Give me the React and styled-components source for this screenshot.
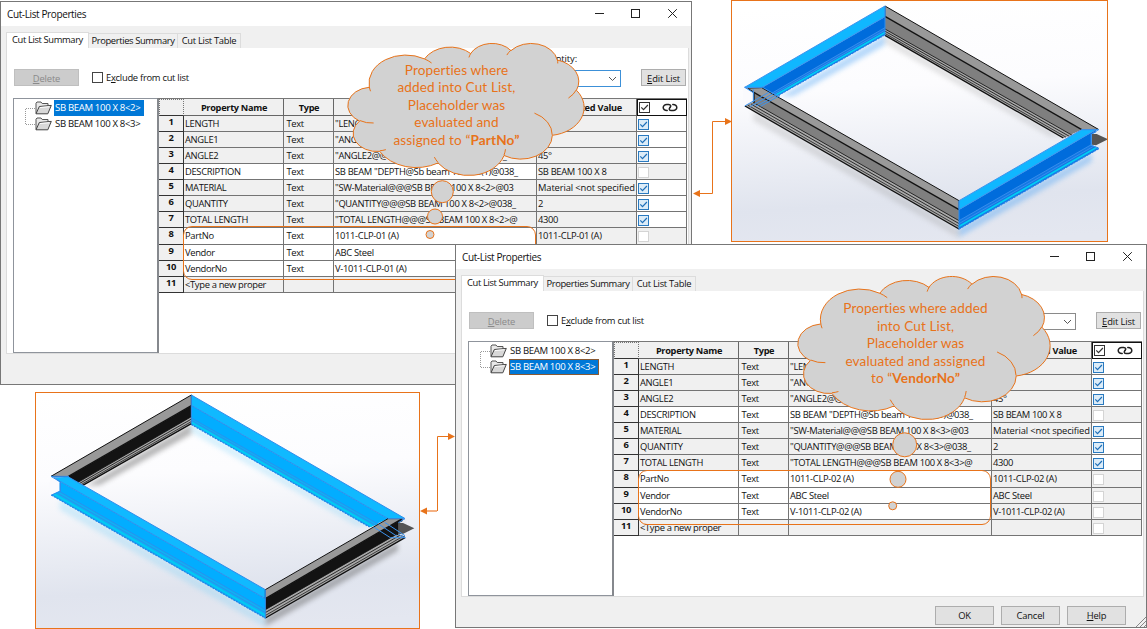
import React from "react";
import styled, { createGlobalStyle, css } from "styled-components";

const ORANGE = "#e8731a";

const GlobalStyle = createGlobalStyle`
  body { margin: 0; background: #fff; }
  * { box-sizing: border-box; }
`;

const Desktop = styled.main`
  position: relative;
  width: 1147px;
  height: 629px;
  overflow: hidden;
  background: #fff;
  font: 9.4px/12px "Open Sans", "Noto Sans", sans-serif;
  letter-spacing: -0.3px;
  color: #111;
  white-space: nowrap;
`;

const Placed = styled.div`
  position: absolute;
  left: ${(p) => p.$x}px;
  top: ${(p) => p.$y}px;
`;

const Overlay = styled.svg`
  position: absolute;
  left: 0;
  top: 0;
  pointer-events: none;
`;

/* ---------- dialog ---------- */

const Dialog = styled.section`
  width: 692px;
  height: 384px;
  display: flex;
  flex-direction: column;
  background: #f0f0f0;
  border: 1px solid #777;
`;

const TitleBar = styled.header`
  flex: 0 0 24px;
  display: flex;
  align-items: center;
  justify-content: space-between;
  padding: 0 13px 0 6px;
  background: #fff;
`;

const Title = styled.span`
  margin-top: -1px;
  font-size: 10px;
  letter-spacing: -0.38px;
`;

const WindowButtons = styled.div`
  display: flex;
  gap: 26px;
  margin-top: -1px;
  svg { display: block; }
`;

const Tabs = styled.nav`
  flex: 0 0 22px;
  display: flex;
  align-items: flex-end;
  padding-left: 5px;
`;

const Tab = styled.div`
  width: ${(p) => p.$w}px;
  height: ${(p) => (p.$active ? 17 : 15)}px;
  margin-bottom: ${(p) => (p.$active ? -1 : 0)}px;
  padding-top: 1px;
  text-align: center;
  background: ${(p) => (p.$active ? "#fff" : "#f0f0f0")};
  border: 1px solid #dcdcdc;
  border-bottom: 0;
  border-left-width: ${(p) => (p.$active ? 1 : 0)}px;
  letter-spacing: ${(p) => p.$ls}px;
`;

const Panel = styled.div`
  flex: 0 0 306px;
  display: flex;
  flex-direction: column;
  margin: 0 2px 0 5px;
  background: #fff;
  border: solid #dcdcdc;
  border-width: 0 1px 1px;
`;

const Toolbar = styled.div`
  flex: 0 0 50px;
  display: flex;
  align-items: flex-start;
  padding: 22px 2px 0 7px;
`;

const Button = styled.button`
  width: ${(p) => p.$w}px;
  height: ${(p) => p.$h || 17}px;
  padding: ${(p) => (p.$h ? 0 : "2px")} 0 0;
  font: inherit;
  font-size: 9.4px;
  letter-spacing: -0.15px;
  line-height: 12px;
  color: ${(p) => (p.disabled ? "#8a8a8a" : "#111")};
  background: ${(p) => (p.disabled ? "#ccc" : "#e1e1e1")};
  border: 1px solid ${(p) => (p.disabled ? "#bfbfbf" : "#adadad")};
`;

const ButtonSlot = styled.div`
  display: flex;
  margin: -1px 0 0 ${(p) => p.$gap || 0}px;
`;

const Exclude = styled.label`
  display: flex;
  align-items: center;
  gap: 3px;
  height: 15px;
  margin-left: 13px;
  letter-spacing: -0.27px;
`;

const Box = styled.span`
  flex: none;
  width: 11px;
  height: 11px;
  background: #fff;
  border: 1px solid #444;
`;

const Quantity = styled.div`
  position: relative;
  width: 80px;
  height: 17px;
  margin-left: auto;
  display: flex;
  align-items: center;
  justify-content: flex-end;
  padding-right: 3px;
  border: 1px solid ${(p) => (p.$focus ? "#3c90d8" : "#8a8a8a")};
`;

const QuantityLabel = styled.span`
  position: absolute;
  right: 43px;
  top: -18px;
  letter-spacing: -0.1px;
`;

const Content = styled.div`
  flex: 1;
  display: flex;
  padding-left: 6px;
`;

const Tree = styled.div`
  flex: 0 0 144px;
  border: 1px solid #8f949c;
  border-right: 0;
  padding: 1px 0 0 11px;
  display: flex;
`;

const TreeItems = styled.div`
  display: flex;
  flex-direction: column;
`;

const TreeItem = styled.div`
  display: flex;
  align-items: center;
  gap: 2px;
  height: 16.2px;
  svg { display: block; flex: none; }
`;

const TreeLabel = styled.span`
  height: 16px;
  width: 90px;
  padding: 2px 0 0 1px;
  font-size: 9.6px;
  letter-spacing: -0.35px;
  ${(p) =>
    p.$on &&
    css`
      color: #fff;
      background: #0078d7;
      box-shadow: ${p.$focus ? "inset 0 0 0 1px #8a5a33" : "none"};
    `}
`;

const TableArea = styled.div`
  flex: 0 0 530px;
  border-left: 2px solid #85888d;
  border-top: 1px solid #777;
`;

const Row = styled.div`
  display: grid;
  grid-template-columns: 25px 100px 50px 203px 100px 50px;
  height: ${(p) => (p.$head ? 17 : 16.07)}px;
`;

const Cell = styled.div`
  overflow: hidden;
  padding: 2px 0 0 ${(p) => p.$pad ?? 1}px;
  letter-spacing: ${(p) => p.$ls ?? -0.33}px;
  background: ${(p) => (p.$white ? "#fff" : "#f0f0f0")};
  border: solid #747474;
  border-width: 0 1px 1px 0;
`;

const HeadCell = styled(Cell)`
  padding-top: 3px;
  font-weight: 700;
  text-align: center;
  font-size: 9.2px;
  color: #111;
  border-color: #666;
`;

const NumCell = styled(Cell)`
  padding: 0;
  text-align: center;
  font-weight: 700;
  border-color: #333;
`;

const CheckHead = styled.div`
  display: flex;
  align-items: center;
  justify-content: space-between;
  padding: 0 8px 0 1px;
  background: #fff;
  border: 1px solid #111;
`;

const CheckCell = styled(Cell)`
  padding: 3px 0 0 1px;
  svg { display: block; }
`;

const Corner = styled(Cell)`
  border: 1px dotted #777;
  border-bottom: 1px solid #333;
`;

const Footer = styled.footer`
  flex: 1;
  position: relative;
  display: flex;
  align-items: flex-start;
  justify-content: flex-end;
  gap: 7px;
  padding: 9px 20px 0 0;
`;

const Grip = styled.svg`
  position: absolute;
  right: 0;
  bottom: 0;
`;

const Check = ({ on, dark }) => (
  <svg width="11" height="11" viewBox="0 0 11 11">
    <rect x=".5" y=".5" width="10" height="10" fill={dark ? "#fff" : on ? "#dcecf8" : "#fff"}
      stroke={dark ? "#333" : on ? "#2a7ac0" : "#d4d4d4"} />
    {on && <path d="M2.3 5.4 4.5 7.7 8.9 3" fill="none" stroke={dark ? "#333" : "#1f6fb8"} strokeWidth="1.2" />}
  </svg>
);

const LinkIcon = () => (
  <svg width="16" height="9" viewBox="0 0 16 9" fill="none" stroke="#222" strokeWidth="1.500" strokeLinecap="round">
    <path d="M5.200 7.500C-.2 7.700.1 1.500 4.800 1.500H6.600C9 1.500 9.200 3.300 8 4.500" />
    <path d="M10.800 1.500C16.200 1.300 15.900 7.500 11.200 7.500H9.400C7 7.500 6.800 5.700 8 4.500" />
  </svg>
);

const Folder = () => (
  <svg width="17" height="14" viewBox="0 0 17 14">
    <path d="M1 12.500V2.200L2 1h4l1.200 1.500H13V5" fill="#e9e9e9" stroke="#555" />
    <path d="M1 12.800 4.300 5.500 16.300 4.400 12.800 12.800Z" fill="#d8d8d8" stroke="#444" strokeLinejoin="round" />
    <path d="M5 6.500 14.500 5.700" stroke="#fff" />
  </svg>
);

const Branch = () => (
  <svg width="10" height="34" viewBox="0 0 10 34" fill="none" stroke="#999" strokeDasharray="1 1">
    <path d="M10 8.500H.5V24.500H10" />
  </svg>
);

const rowsFor = (n) => [
  ["LENGTH", `"LENGTH@@@SB BEAM 100 X 8<${n}>@038_`, "", 1, 0],
  ["ANGLE1", `"ANGLE1@@@SB BEAM 100 X 8<${n}>@038_`, "", 1, 0],
  ["ANGLE2", `"ANGLE2@@@SB BEAM 100 X 8<${n}>@038_`, "45°", 1, 0],
  ["DESCRIPTION", `SB BEAM "DEPTH@Sb beam 100 X 8(1)@038_`, "SB BEAM 100 X 8", 0, 1],
  ["MATERIAL", `"SW-Material@@@SB BEAM 100 X 8<${n}>@03`, "Material <not specified", 1, 0],
  ["QUANTITY", `"QUANTITY@@@SB BEAM 100 X 8<${n}>@038_`, "2", 1, 0],
  ["TOTAL LENGTH", `"TOTAL LENGTH@@@SB BEAM 100 X 8<${n}>@`, "4300", 1, 0],
  ["PartNo", `1011-CLP-0${n - 1} (A)`, `1011-CLP-0${n - 1} (A)`, 0, 1],
  ["Vendor", "ABC Steel", n === 3 ? "ABC Steel" : "", 0, 1],
  ["VendorNo", `V-1011-CLP-0${n - 1} (A)`, n === 3 ? `V-1011-CLP-0${n - 1} (A)` : "", 0, 1],
  ["<Type a new proper", "", "", 0, 0],
];

function CutListDialog({ selected, front }) {
  return (
    <Dialog>
      <TitleBar>
        <Title>Cut-List Properties</Title>
        <WindowButtons>
          <svg width="11" height="11"><path d="M2 5.500h9" stroke="#222" /></svg>
          <svg width="11" height="11"><rect x="1.500" y="1.500" width="8" height="8" fill="none" stroke="#222" /></svg>
          <svg width="11" height="11"><path d="M1.200 1.200l8.600 8.600M9.800 1.200l-8.600 8.600" stroke="#222" /></svg>
        </WindowButtons>
      </TitleBar>
      <Tabs>
        <Tab $active $w={83} $ls={-0.38}>Cut List Summary</Tab>
        <Tab $w={89} $ls={-0.38}>Properties Summary</Tab>
        <Tab $w={63} $ls={-0.3}>Cut List Table</Tab>
      </Tabs>
      <Panel>
        <Toolbar>
          <ButtonSlot><Button $w={65} disabled><u>D</u>elete</Button></ButtonSlot>
          <Exclude><Box /><span>E<u>x</u>clude from cut list</span></Exclude>
          <Quantity $focus={!front}>
            {!front && <QuantityLabel>Quantity:</QuantityLabel>}
            <svg width="9" height="6"><path d="M1 1l3.500 3.500L8 1" fill="none" stroke="#555" /></svg>
          </Quantity>
          <ButtonSlot $gap={20}><Button $w={45}><u>E</u>dit List</Button></ButtonSlot>
        </Toolbar>
        <Content>
          <Tree>
            <Branch />
            <TreeItems>
              {[2, 3].map((n) => (
                <TreeItem key={n}>
                  <Folder />
                  <TreeLabel $on={n === selected} $focus={front}>{`SB BEAM 100 X 8<${n}>`}</TreeLabel>
                </TreeItem>
              ))}
            </TreeItems>
          </Tree>
          <TableArea>
            <Row $head>
              <Corner />
              <HeadCell $ls={-0.3}>Property Name</HeadCell>
              <HeadCell>Type</HeadCell>
              <HeadCell />
              <HeadCell $ls={-0.25}>Evaluated Value</HeadCell>
              <CheckHead><Check on dark /><LinkIcon /></CheckHead>
            </Row>
            {rowsFor(selected).map(([name, value, evaluated, on, editable], i) => (
              <Row key={name}>
                <NumCell>{i + 1}</NumCell>
                <Cell $white={editable}>{name}</Cell>
                <Cell $pad={2.5} $white={editable}>{i < 10 ? "Text" : ""}</Cell>
                <Cell $white={editable}>{value}</Cell>
                <Cell $ls={evaluated.length > 20 ? -0.13 : undefined}>{evaluated}</Cell>
                <CheckCell $white={on}><Check on={on} /></CheckCell>
              </Row>
            ))}
          </TableArea>
        </Content>
      </Panel>
      <Footer>
        {front && (
          <>
            <Button $w={59} $h={19}>OK</Button>
            <Button $w={59} $h={19}>Cancel</Button>
            <Button $w={59} $h={19}><u>H</u>elp</Button>
            <Grip width="10" height="10"><path d="M0 10 10 0M4 10 10 4M8 10l2-2" stroke="#888" /></Grip>
          </>
        )}
      </Footer>
    </Dialog>
  );
}

/* ---------- beam frame renders ---------- */

const View = styled.svg`
  display: block;
`;

const GREY = { flange: "#999", web: "#7f7f7f", line: "#111", low: "#a8a8a8", glow: "#999" };
const BLACK = { flange: "#999", web: "#131313", line: "#111", low: "#a8a8a8", glow: "#555" };
const BLUE = { flange: "#10b7ff", web: "#006cdc", line: "#3f93ee", low: "#1478e4", glow: "#4fa4f5" };
const SKY = { flange: "#10b9ff", web: "#02adff", line: "#2f8cec", low: "#10b0f4", glow: "#6fcff8" };

function Beam({ top, mid, base, end, pal }) {
  // Each edge is [x, y, x, y]: upper flange edge, flange/web edge, web base, lower edge.
  const quad = (a, b) => `M${a[0]} ${a[1]}L${a[2]} ${a[3]}L${b[2]} ${b[3]}L${b[0]} ${b[1]}Z`;
  const mix = (t) => end.map((v, i) => base[i] + (v - base[i]) * t);
  const line = (e) => `M${e[0]} ${e[1]}L${e[2]} ${e[3]}`;
  const bright = pal === BLUE || pal === SKY;
  return (
    <g>
      <path d={quad(mid, end)} fill={pal.web} />
      <path d={quad(base, end)} fill={pal.low} />
      <path d={quad(top, mid)} fill={pal.flange} />
      <path d={line(top)} stroke={pal.line} strokeWidth="3" />
      <path d={line(mid)} stroke={pal.line} strokeWidth={bright ? 3 : 4} />
      <path d={line(base) + line(mix(0.35))} stroke={pal.line} strokeWidth="2.500" />
      <path d={line(mix(0.7))} stroke={bright ? "#00cdf4" : "#222"} strokeWidth={bright ? 5 : 2.5} />
      <path d={line(end)} stroke={bright ? "#2585e8" : "#111"} strokeWidth="4" strokeDasharray={bright ? "6 3" : "none"} />
      <path d={`M${top[0]} ${top[1]}L${mid[0]} ${mid[1]}M${top[2]} ${top[3]}L${mid[2]} ${mid[3]}`} stroke={pal.line} strokeWidth="2" />
    </g>
  );
}

function FrameView({ width, height, viewBox, short, long, shift, id }) {
  return (
    <View width={width} height={height} viewBox={viewBox} preserveAspectRatio="none">
      <defs>
        <linearGradient id={`${id}bg`} x1=".4" y1="0" x2=".5" y2="1">
          <stop offset="0" stopColor="#fff" />
          <stop offset=".35" stopColor="#fcfcfe" />
          <stop offset=".82" stopColor="#e0e4ee" />
          <stop offset="1" stopColor="#e4e7f0" />
        </linearGradient>
        <filter id={`${id}soft`} x="-20%" y="-20%" width="140%" height="140%">
          <feGaussianBlur stdDeviation="8" />
        </filter>
      </defs>
      <rect x="0" y="0" width="1170" height="735" fill={`url(#${id}bg)`} />
      <g transform={shift}>
        <g filter={`url(#${id}soft)`} opacity=".42">
          <path d="M150 290 465 105V135L190 288Z" fill={short.glow} />
          <path d="M687 685 1085 460V485L687 712Z" fill={short.glow} />
        </g>
        <g filter={`url(#${id}soft)`} opacity=".28">
          <path d="M465 105 1000 412 960 410 465 130Z" fill={long.glow} />
          <path d="M70 330 687 688V714L70 362Z" fill={long.glow} />
        </g>
        <Beam pal={long} top={[465, 18, 1105, 388]} mid={[465, 49, 1055, 389]} base={[465, 87, 1027, 406]} end={[465, 106, 1000, 414]} />
        <Beam pal={short} top={[44, 262, 465, 18]} mid={[95, 263, 465, 50]} base={[125, 280, 465, 83]} end={[138, 290, 465, 104]} />
        <path d="M44 264 72 280V305L44 317Z" fill="#fafafd" />
        <Beam pal={long} top={[95, 263, 687, 602]} mid={[52, 266, 687, 629]} base={[74, 310, 687, 662]} end={[45, 318, 687, 687]} />
        <path d="M40 264H50L70 279V306L46 317H40Z" fill="#fafafd" />
        <path d="M72 280V310" stroke={long.line} strokeWidth="4" />
        {long === GREY ? (
          <>
            <path d="M44 262 70 278M44 262H98L150 292M44 318 118 276M60 320 130 280M78 319 140 284M92 319 150 286M70 268V306" fill="none" stroke="#3c93ee" strokeWidth="3" />
          </>
        ) : (
          <path d="M44 262 72 279M44 262H98M44 319 72 306" fill="none" stroke="#2f8cec" strokeWidth="3" />
        )}
        <Beam pal={short} top={[687, 602, 1055, 389]} mid={[687, 629, 1098, 389]} base={[687, 662, 1084, 434]} end={[687, 687, 1106, 446]} />
        <path d="M1110 391 1086 403V436L1108 443Z" fill="#e9ecf2" />
        <path d="M1086 402 1100 402 1134 418 1098 436 1086 434Z" fill="#555" />
        <path d="M1084 401V438" stroke={short.line} strokeWidth="4" />
        <path d="M1055 389H1106L1086 401M1086 436 1106 446" fill="none" stroke="#3c93ee" strokeWidth="3" />
        {long === SKY && (
          <path d="M1012 414 1062 446H1108M1028 406 1082 442M1045 400 1106 440" fill="none" stroke="#3c93ee" strokeWidth="3" />
        )}
        <path d="M465 18V106M687 602V689" stroke="#2f8cec" strokeWidth="3" />
      </g>
    </View>
  );
}

const Picture = styled.figure`
  margin: 0;
  width: ${(p) => p.$w}px;
  height: ${(p) => p.$h}px;
  overflow: hidden;
  border: 1px solid ${ORANGE};
`;

/* ---------- callouts ---------- */

const OUTLINE = [
  [6753, 9190, -11429249, 7426832],
  [5333, 7267, -8646143, 5396714],
  [4365, 5945, -8748475, 5983381],
  [4857, 6595, -7859164, 7034504],
  [5333, 7273, -4722533, 6541615],
  [6775, 9220, -2776035, 7816140],
  [5785, 7867, 37501, 6842000],
  [6752, 9215, 1347096, 6910353],
  [7720, 10543, 3974558, 4542661],
  [4360, 5918, -16496525, 8804134],
  [4345, 5945, -14809710, 9151131],
];

const CREASES = [
  [4693, 26177, 4345, 5945, 5204520, 1585770],
  [6928, 34899, 4360, 5918, 4416628, 686848],
  [16478, 39090, 6752, 9215, 8257449, 844866],
  [28827, 34751, 6752, 9215, 387196, 959901],
  [34129, 22954, 5785, 7867, -4217541, 4255042],
  [41798, 15354, 5333, 7273, 1819082, 1665090],
  [38324, 5426, 4857, 6595, -824660, 891534],
  [29078, 3952, 4857, 6595, -8950887, 1091722],
  [22141, 4720, 4365, 5945, -9809656, 1061181],
  [14000, 5192, 6753, 9190, -4002417, 739161],
  [4127, 15789, 6753, 9190, 9459261, 711490],
];

// Turns a start point and a list of elliptical arcs (angles in 1/60000 degree) into path data.
function arcs(x, y, list, sx, sy) {
  const param = (a, rx, ry) => Math.atan2(rx * Math.sin(a), ry * Math.cos(a));
  let d = `M${x * sx} ${y * sy}`;
  list.forEach(([rx, ry, start, sweep]) => {
    const a = (start / 60000) * (Math.PI / 180);
    const b = a + (sweep / 60000) * (Math.PI / 180);
    const ta = param(a, rx, ry);
    const tb = param(b, rx, ry);
    x += rx * (Math.cos(tb) - Math.cos(ta));
    y += ry * (Math.sin(tb) - Math.sin(ta));
    d += `A${rx * sx} ${ry * sy} 0 ${sweep > 10800000 || (tb - ta + 4 * Math.PI) % (2 * Math.PI) > Math.PI ? 1 : 0} 1 ${x * sx} ${y * sy}`;
  });
  return d;
}

const CloudBox = styled.div`
  position: relative;
  width: ${(p) => p.$w}px;
  height: ${(p) => p.$h}px;
`;

const CloudShape = styled.svg`
  position: absolute;
  inset: 0;
  overflow: visible;
`;

const CloudText = styled.p`
  position: relative;
  margin: 0;
  padding: ${(p) => p.$top}px ${(p) => p.$right}px 0 0;
  text-align: center;
  color: ${ORANGE};
  font: 13.6px/17.5px Lato, "Open Sans", sans-serif;
  letter-spacing: ${(p) => p.$ls}px;
`;

function Cloud({ w, h, top, right, ls, children }) {
  const sx = w / 43200;
  const sy = h / 43200;
  return (
    <CloudBox $w={w} $h={h}>
      <CloudShape width={w} height={h} stroke={ORANGE} strokeWidth="1">
        <path d={arcs(3900, 14370, OUTLINE, sx, sy) + "Z"} fill="#d2d2d2" />
        <path d={CREASES.map(([x, y, ...arc]) => arcs(x, y, [arc], sx, sy)).join("")} fill="none" />
      </CloudShape>
      <CloudText $top={top} $right={right} $ls={ls}>{children}</CloudText>
    </CloudBox>
  );
}

const Highlight = styled.div`
  width: 353px;
  height: ${(p) => p.$h}px;
  border: 1.500px solid ${ORANGE};
  border-radius: 9px;
`;

const Dots = ({ list }) => (
  <Overlay width="1147" height="629">
    {list.map(([x, y, r]) => (
      <circle key={y} cx={x} cy={y} r={r} fill="#d2d2d2" stroke={ORANGE} />
    ))}
  </Overlay>
);

export default function App() {
  return (
    <>
      <GlobalStyle />
      <Desktop>
        <Placed $x={0} $y={1}><CutListDialog selected={2} /></Placed>
        <Placed $x={183} $y={226}><Highlight $h={54} /></Placed>
        <Placed $x={348} $y={43}>
          <Cloud w={236} h={132} top={18.500} right={19} ls={0.1}>
            Properties where<br />added into Cut List,<br />Placeholder was<br />evaluated and<br />assigned to “<b>PartNo”</b>
          </Cloud>
        </Placed>
        <Dots list={[[442.3, 191.7, 11], [435, 216.5, 7.5], [430, 234.5, 4]]} />

        <Placed $x={731} $y={0}>
          <Picture $w={377} $h={242}>
            <FrameView id="a" width={375} height={240} viewBox="6 3 1125 720" short={BLUE} long={GREY} />
          </Picture>
        </Placed>
        <Placed $x={35} $y={392}>
          <Picture $w={385} $h={237}>
            <FrameView id="b" width={383} height={235} viewBox="18 24 1149 705" short={BLACK} long={SKY} shift="translate(19 12)" />
          </Picture>
        </Placed>

        <Placed $x={455} $y={244}><CutListDialog selected={3} front /></Placed>
        <Placed $x={638} $y={470}><Highlight $h={55} /></Placed>
        <Placed $x={798} $y={276}>
          <Cloud w={252} h={143} top={24} right={17} ls={0.1}>
            Properties where added<br />into Cut List,<br />Placeholder was<br />evaluated and assigned<br />to “<b>VendorNo”</b>
          </Cloud>
        </Placed>
        <Dots list={[[904.7, 444.8, 12], [898, 479.3, 8], [892.7, 505.8, 4]]} />

        <Overlay width="1147" height="629" fill="none" stroke={ORANGE}>
          <path d="M699 193.500H712.500V121.500H725M437.500 511V436.500H449" />
          <path d="M426 511H437" stroke="#f4b183" strokeWidth="2" />
          <path d="M693 193.500l7-3.500v7zM732 121.500l-7-3.500v7zM420 511l7-3.500v7zM455 436.500l-7-3.500v7z" fill={ORANGE} stroke="none" />
        </Overlay>
      </Desktop>
    </>
  );
}
